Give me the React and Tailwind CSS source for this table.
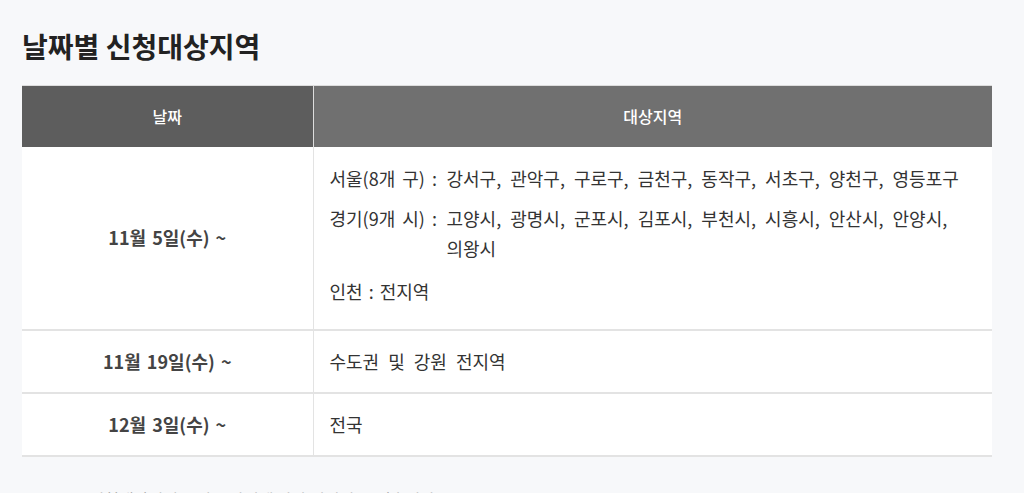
const rows = [
  {
    date: "11월 5일(수) ~",
    areas: [
      {
        label: "서울(8개 구) :",
        text: "강서구, 관악구, 구로구, 금천구, 동작구, 서초구, 양천구, 영등포구",
      },
      {
        label: "경기(9개 시) :",
        text: "고양시, 광명시, 군포시, 김포시, 부천시, 시흥시, 안산시, 안양시, 의왕시",
      },
      { label: "인천 :", text: "전지역" },
    ],
  },
  { date: "11월 19일(수) ~", text: "수도권 및 강원 전지역" },
  { date: "12월 3일(수) ~", text: "전국" },
];

export default function App() {
  return (
    <div
      className="min-h-[493px] bg-[#f7f8fa] px-[22px] pt-[26px] text-[#333]"
      style={{ fontFamily: '"Noto Sans CJK KR", "Noto Sans", sans-serif' }}
    >
      <h2 className="text-[28px] font-bold leading-[40px] text-[#222]">
        날짜별 신청대상지역
      </h2>

      <table className="mt-[19px] w-[970px] border-collapse bg-white text-[18px] break-keep">
        <thead>
          <tr className="h-[61px] border-t border-[#ddd] text-white">
            <th className="w-[291px] bg-[#5d5d5d] text-[16px] font-medium">날짜</th>
            <th className="border-l border-[#ddd] bg-[#707070] text-[16px] font-medium">대상지역</th>
          </tr>
        </thead>
        <tbody>
          {rows.map((r) => (
            <tr key={r.date} className="border-b-2 border-[#e3e3e3]">
              <td className="text-center font-semibold text-[#444] [word-spacing:2px]">{r.date}</td>
              <td className="border-l border-[#e3e3e3] px-[16px] [word-spacing:5px]">
                {r.areas ? (
                  <ul className="pt-[16px] pb-[23px] leading-[30px]">
                    {r.areas.map((a, i) =>
                      a.label === "인천 :" ? (
                        <li key={a.label} className="mt-[13px] [word-spacing:2px]">
                          {a.label} {a.text}
                        </li>
                      ) : (
                        <li key={a.label} className={i > 0 ? "mt-[10px] flex" : "flex"}>
                          <span className="w-[117px] shrink-0 whitespace-nowrap [word-spacing:3px]">
                            {a.label}
                          </span>
                          <span>{a.text}</span>
                        </li>
                      )
                    )}
                  </ul>
                ) : (
                  <div className="flex h-[61px] items-center">{r.text}</div>
                )}
              </td>
            </tr>
          ))}
        </tbody>
      </table>

      <p className="mt-[27px] pl-[48px] text-[16px] leading-[30px] text-[#999]">
        ※ 신청대상지역은 정부 사정에 따라 변경될 수 있습니다.
      </p>
    </div>
  );
}
